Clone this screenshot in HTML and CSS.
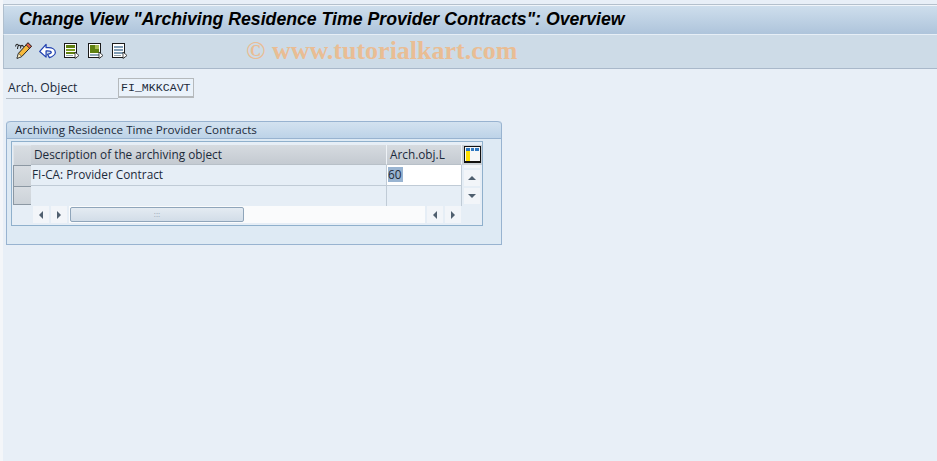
FILE: index.html
```html
<!DOCTYPE html>
<html lang="en">
<head>
  <meta charset="UTF-8">
  <title>Change View</title>
  <link rel="stylesheet" href="styles.css">
</head>
<body>
  <div class="screen">

    <!-- Title bar -->
    <div class="title-bar">
      <h1>Change View "Archiving Residence Time Provider Contracts": Overview</h1>
    </div>

    <!-- Application toolbar -->
    <div class="toolbar">
      <svg class="icon pencil" viewBox="0 0 17 17">
        <path d="M.5 4.500C1 1.500 3 1.500 3.500 4M2.500 7C2.500 3 5 2 6 5M5.500 6.500C5.500 3 7.500 2.500 8.500 5" fill="none" stroke="#222" stroke-width="1.100"/>
        <path d="M13 .8l3.500 3.500L6.800 14.500 2 16.300l1.500-5z" fill="#f6b93c" stroke="#222" stroke-width="1"/>
        <path d="M13 .8l3.500 3.500-2 2-3.500-3.500z" fill="#e0604a" stroke="#222" stroke-width=".8"/>
        <path d="M2 16.300l1.500-5 3.300 3.200z" fill="#fff3c8" stroke="#222" stroke-width=".6"/>
      </svg>
      <svg class="icon undo" viewBox="0 0 18 18">
        <path d="M.8 10L7.500 2.500v3.500h2.500c4 0 7.300 2 7.300 5 0 2-3 4.500-6.300 5.500L9 13c2-.5 4-1 4-2s-2-1.500-4-1.500H7.500V16z" fill="#fff" stroke="#1f3fb0" stroke-width="1.300" stroke-linejoin="round"/>
      </svg>
      <svg class="icon doc" viewBox="0 0 16 16">
        <rect x=".5" y=".5" width="12" height="14" fill="#fff" stroke="#1a1a1a"/>
        <path d="M2 2h9v3H2z" fill="#5f8010"/><path d="M2 6h9v2H2z" fill="#7f9f20"/><path d="M2 9h9v2H2z" fill="#5f8010"/>
        <path d="M2 12h7v1H2z" fill="#90a0a8"/>
        <path d="M11 9l4 3.500-4 3z" fill="#fff" stroke="#222" stroke-width=".8"/>
      </svg>
      <svg class="icon doc" viewBox="0 0 16 16">
        <rect x=".5" y=".5" width="12" height="14" fill="#fff" stroke="#1a1a1a"/>
        <path d="M2 2h9v8H2z" fill="#5f8010"/><path d="M7 2h4v4H7z" fill="#a8bc50"/>
        <path d="M2 11h9v2H2z" fill="#90a8b8"/>
        <path d="M11 9l4 3.500-4 3z" fill="#fff" stroke="#222" stroke-width=".8"/>
      </svg>
      <svg class="icon doc" viewBox="0 0 16 16">
        <rect x=".5" y=".5" width="12" height="14" fill="#fff" stroke="#1a1a1a"/>
        <path d="M2 3h9v2H2zM2 6h9v2H2zM2 9h9v2H2z" fill="#7f9cb4"/>
        <path d="M2 12h7v1H2z" fill="#90a0a8"/>
        <path d="M11 9l4 3.500-4 3z" fill="#fff" stroke="#222" stroke-width=".8"/>
      </svg>
      <span class="watermark">© www.tutorialkart.com</span>
    </div>

    <div class="content">
      <!-- Key field -->
      <div class="field-row">
        <span class="field-label">Arch. Object</span>
        <span class="field-value">FI_MKKCAVT</span>
      </div>

      <!-- Table group -->
      <div class="panel">
        <div class="panel-title">Archiving Residence Time Provider Contracts</div>
        <div class="panel-body">
          <div class="table-frame">
            <div class="table-grid">
              <div class="marker first"></div>
              <div class="head-cell">Description of the archiving object</div>
              <div class="head-cell">Arch.obj.L</div>
              <div class="config-btn">
                <svg viewBox="0 0 17 17" width="17" height="17">
                  <rect x=".5" y=".5" width="16" height="16" fill="#f6f7f8" stroke="#111"/>
                  <path d="M2 2h4v3H2zM7 2h3v3H7zM11 2h4v3h-4z" fill="#2f78c0"/>
                  <path d="M2 5h4v10H2z" fill="#ffe000"/>
                  <path d="M1 15.500h15" stroke="#111"/>
                </svg>
              </div>

              <div class="marker"></div>
              <div class="cell">FI-CA: Provider Contract</div>
              <div class="cell input-cell"><span class="selected">60</span></div>
              <div class="scroll-side up"><span class="step"><i class="tri-up"></i></span></div>

              <div class="marker closing"></div>
              <div class="cell last"></div>
              <div class="cell last"></div>
              <div class="scroll-side down"><span class="step"><i class="tri-down"></i></span></div>
            </div>

            <div class="h-scroll">
              <span class="step"><i class="tri-left"></i></span>
              <span class="step"><i class="tri-right"></i></span>
              <div class="track">
                <div class="thumb">:::</div>
              </div>
              <span class="step"><i class="tri-left"></i></span>
              <span class="step"><i class="tri-right"></i></span>
            </div>
          </div>
        </div>
      </div>
    </div>
  </div>
</body>
</html>
```

FILE: styles.css
```css
/* General styles */
html, body {
  margin: 0;
  padding: 0;
  height: 100%;
  overflow: hidden;
}

body {
  background-color: #f4f6f9;
  font-family: "Open Sans", Arial, sans-serif;
  font-size: 11.8px;
  color: #1c2a3a;
}

.screen {
  display: flex;
  flex-direction: column;
  height: 461px;
  margin-left: 3px;
  padding-top: 4px;
  box-sizing: border-box;
  background-color: #e8eff7;
}

/* Title bar */
.title-bar {
  height: 31px;
  box-sizing: border-box;
  display: flex;
  align-items: center;
  padding-left: 15px;
  background: linear-gradient(#cfdfed, #aec4db);
  border-top: 1px solid #b4c0cc;
  border-left: 1px solid #b0bfce;
  border-bottom: 1px solid #e6eef6;
  box-shadow: inset 0 1px 0 #f0f5fa;
}

.title-bar h1 {
  margin: 0;
  font-family: "Liberation Sans", Arial, sans-serif;
  font-size: 17.7px;
  font-weight: bold;
  font-style: italic;
  color: #000;
}

/* Toolbar */
.toolbar {
  height: 34px;
  box-sizing: border-box;
  display: flex;
  align-items: center;
  padding: 0 0 2px 11px;
  background-color: #cddbe7;
  border-left: 1px solid #b0bfce;
  border-bottom: 1px solid #a9b8ca;
}

.icon {
  width: 16px;
  height: 16px;
  margin-right: 8px;
}

.icon.pencil,
.icon.undo {
  width: 17px;
  height: 17px;
}

.icon.pencil {
  margin-right: 7px;
}

.watermark {
  margin-left: 110px;
  font-family: "Liberation Serif", serif;
  font-size: 26px;
  font-weight: bold;
  color: #e9bd94;
}

/* Key field */
.content {
  padding: 9px 3px 0;
}

.field-row {
  display: flex;
  height: 21px;
}

.field-label {
  width: 110px;
  padding-left: 2px;
  font-size: 12.2px;
  line-height: 20px;
  border-bottom: 1px solid #b4bcc4;
}

.field-value {
  width: 72px;
  height: 17px;
  line-height: 17px;
  padding-left: 2px;
  font-family: "Liberation Mono", monospace;
  font-size: 11.6px;
  background-color: #eaf2fa;
  border: 1px solid #b5b9bc;
  border-bottom-width: 2px;
}

/* Table group */
.panel {
  width: 496px;
  height: 124px;
  box-sizing: border-box;
  margin-top: 22px;
  border: 1px solid #98b3d0;
  border-top: 0;
  border-radius: 4px 4px 0 0;
  background-color: #deeaf4;
}

.panel-title {
  height: 16px;
  line-height: 15px;
  padding-left: 8px;
  font-size: 11.65px;
  background: linear-gradient(#d3e2f0, #bdd3e8);
  border-top: 1px solid #98b3d0;
  border-bottom: 1px solid #98b3d0;
  border-radius: 4px 4px 0 0;
}

.panel-body {
  padding: 2px 18px 0 4px;
}

.table-frame {
  height: 85px;
  padding: 3px 0 0 1px;
  box-sizing: border-box;
  border: 1px solid #8fb0cc;
  background-color: #e6eef6;
}

.table-grid {
  display: grid;
  grid-template-columns: 18px 356px 75px 20px;
  grid-template-rows: 20px 21px 20px;
}

.marker {
  background: linear-gradient(#d8dde2, #ccd2d8);
  border: 1px solid #8c98a3;
  border-width: 1px 0 0 1px;
  box-sizing: border-box;
}

.marker.first {
  border-color: #dfe4e9;
}

.marker.closing {
  height: 19px;
  border-bottom-width: 1px;
}

.head-cell {
  line-height: 18px;
  padding-left: 3px;
  background: linear-gradient(#d6dbe0, #c4cad1);
  border-right: 1px solid #eef2f6;
  border-bottom: 1px solid #b8c0c8;
}

.cell {
  line-height: 19px;
  padding-left: 1px;
  border-right: 1px solid #c0cbd6;
  border-bottom: 1px solid #c0cbd6;
}

.cell.last {
  border-bottom: 0;
}

.input-cell {
  background-color: #fff;
  padding-left: 1px;
}

.selected {
  display: inline-block;
  line-height: 15px;
  padding-right: 1px;
  background-color: #99b4d1;
}

.config-btn {
  display: flex;
  justify-content: center;
  padding-top: 1px;
  background-color: #c9d0d6;
  height: 19px;
}

.scroll-side {
  display: flex;
  justify-content: center;
  padding-top: 5px;
}

.scroll-side.up {
  background: linear-gradient(#f2f5f9 3px, transparent 3px) center / 16px 100% no-repeat;
}

.scroll-side.down {
  padding-top: 2px;
}

.step {
  display: flex;
  align-items: center;
  justify-content: center;
  width: 16px;
  height: 16px;
  background-color: #f2f5f9;
}

.h-scroll .step {
  height: 17px;
}

.step i {
  width: 0;
  height: 0;
  border-style: solid;
  border-color: transparent;
}

.tri-up {
  border-width: 0 4px 4px;
  border-bottom-color: #4f5f6f !important;
}

.tri-down {
  border-width: 4px 4px 0;
  border-top-color: #4f5f6f !important;
}

.tri-left {
  border-width: 4px 4px 4px 0;
  border-right-color: #4f5f6f !important;
}

.tri-right {
  border-width: 4px 0 4px 4px;
  border-left-color: #4f5f6f !important;
}

/* Horizontal scrollbar */
.h-scroll {
  display: flex;
  align-items: center;
  gap: 2px;
  height: 17px;
  padding-left: 20px;
}

.track {
  width: 356px;
  height: 17px;
  padding: 1px 0 0 1px;
  box-sizing: border-box;
  background-color: #fafbfc;
}

.thumb {
  width: 174px;
  height: 15px;
  box-sizing: border-box;
  line-height: 12px;
  text-align: center;
  font-size: 8px;
  color: #9aa6b2;
  background: linear-gradient(#e4ebf2, #d2dde8);
  border: 1px solid #8fa5ba;
  border-radius: 2px;
}
```
